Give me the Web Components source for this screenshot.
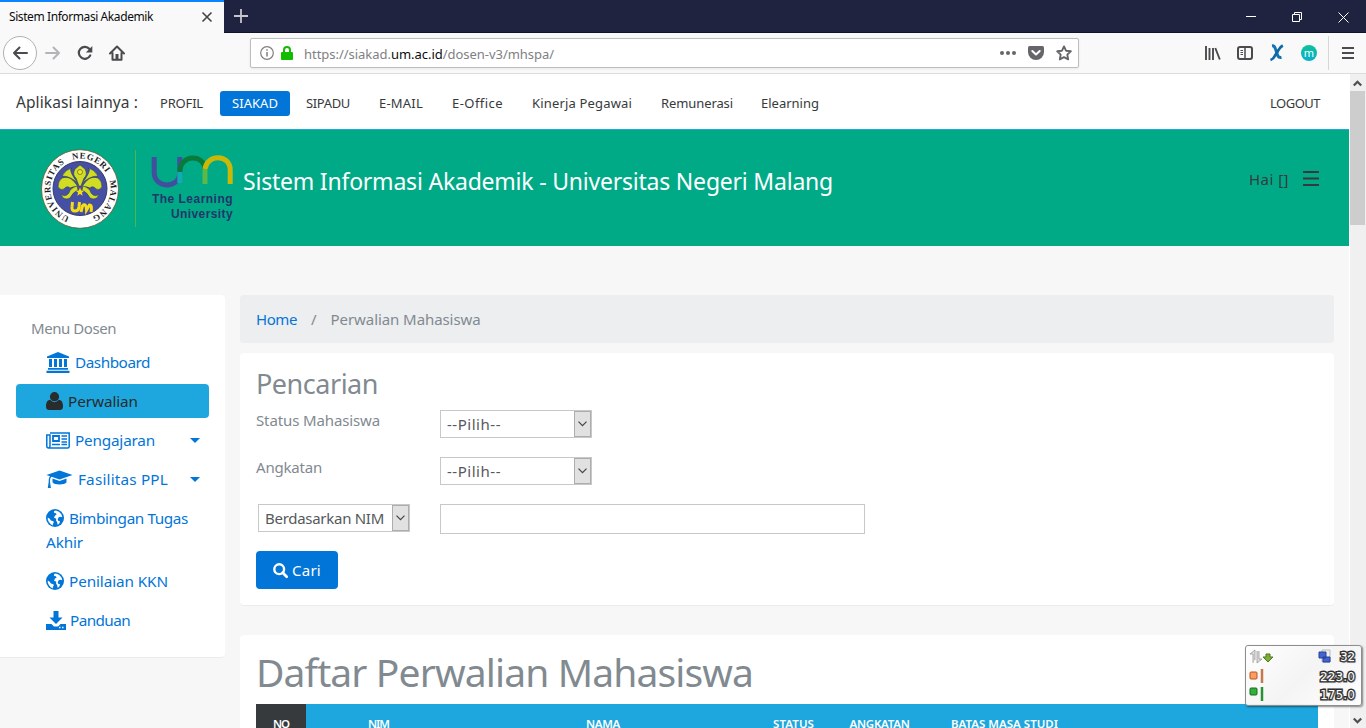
<!DOCTYPE html>
<html lang="id">
<head>
<meta charset="utf-8">
<title>Sistem Informasi Akademik</title>
<style>
html,body{margin:0;height:100%;overflow:hidden;font-family:"Noto Sans","Open Sans",sans-serif;background:#f7f7f7}
</style>
</head>
<body>
<siakad-window></siakad-window>
<script>
const define=(name,html,setup)=>customElements.define(name,class extends HTMLElement{
  connectedCallback(){
    if(this.shadowRoot)return;
    const root=this.attachShadow({mode:'open'});
    root.innerHTML=typeof html==='function'?html(this):html;
    if(setup)setup(this,root);
  }
});

/* A single line of text tracked to a given measure. */
define('ui-text','<style>:host{display:inline-block;white-space:nowrap;flex:none}span{display:inline-block}</style><span><slot></slot></span>',(el,root)=>{
  const w=parseFloat(el.getAttribute('w'));
  if(!w)return;
  const s=root.querySelector('span');
  const n=el.textContent.length;
  el.style.width=w+'px';
  s.style.letterSpacing=((w-s.getBoundingClientRect().width)/n).toFixed(3)+'px';
});

const icons={
 x:[12,12,'<path d="M1.500 1.500l9 9M10.500 1.500l-9 9" fill="none" stroke="currentColor" stroke-width="1.600"/>'],
 plus:[14,14,'<path d="M7 0v14M0 7h14" stroke="currentColor" stroke-width="1.800"/>'],
 back:[16,14,'<path d="M15 7H2M7.500 1.500L2 7l5.500 5.500" fill="none" stroke="currentColor" stroke-width="2" stroke-linecap="round" stroke-linejoin="round"/>'],
 fwd:[16,14,'<path d="M1 7h13M8.500 1.500L14 7l-5.500 5.500" fill="none" stroke="currentColor" stroke-width="2" stroke-linecap="round" stroke-linejoin="round"/>'],
 reload:[16,16,'<path d="M13.200 10.500A6 6 0 1 1 12.500 4" fill="none" stroke="currentColor" stroke-width="2.200" stroke-linecap="round"/><path d="M15.300 1v6.500H8.800z" fill="currentColor"/>'],
 home:[16,16,'<path d="M1 8.500L8 1.500l7 7M3.500 8v6.800h9V8" fill="none" stroke="currentColor" stroke-width="2" stroke-linejoin="round" stroke-linecap="round"/><path d="M6.500 9h3v6h-3z" fill="currentColor"/>'],
 info:[14,14,'<circle cx="7" cy="7" r="6.300" fill="none" stroke="currentColor" stroke-width="1.200"/><path d="M7 6v4.500M7 3.300v1.500" stroke="currentColor" stroke-width="1.500"/>'],
 lock:[12,14,'<path d="M3 7V4a3 3 0 0 1 6 0v3" fill="none" stroke="currentColor" stroke-width="2"/><rect y="6" width="12" height="8" rx="1" fill="currentColor"/>'],
 dots:[16,4,'<g fill="currentColor"><circle cx="2" cy="2" r="2"/><circle cx="8" cy="2" r="2"/><circle cx="14" cy="2" r="2"/></g>'],
 pocket:[16,14,'<path d="M1.500 0h13Q16 0 16 1.500V6a8 8 0 0 1-16 0V1.500Q0 0 1.500 0z" fill="currentColor"/><path d="M4.300 5L8 8.500 11.700 5" fill="none" stroke="#fff" stroke-width="2" stroke-linecap="round" stroke-linejoin="round"/>'],
 star:[16,16,'<path d="M8 1.400l2 4.300 4.800.600-3.500 3.300.900 4.800L8 12.100l-4.200 2.300.900-4.800L1.200 6.300 6 5.700z" fill="none" stroke="currentColor" stroke-width="1.900" stroke-linejoin="round"/>'],
 library:[16,14,'<path d="M1 0v14M4.500 2v12M8 2v12M10.300 2l4.500 11.500" fill="none" stroke="currentColor" stroke-width="1.900"/>'],
 sidebar:[16,14,'<rect x="1" y="1" width="14" height="12" rx="2" fill="none" stroke="currentColor" stroke-width="2"/><path d="M8 1v12" stroke="currentColor" stroke-width="1.500"/><path d="M3.500 4.500h2.500M3.500 6.500h2.500M3.500 8.500h2.500" stroke="currentColor"/>'],
 xbird:[14,16,'<path d="M2 .8Q4.500.500 5.500 4l2 6q1 3 4 2.500" fill="none" stroke="#1172b5" stroke-width="2.900"/><path d="M12.800.500Q10 2 8.500 5L4.800 11Q3.500 14 .5 15" fill="none" stroke="#0d68a8" stroke-width="2.700"/>'],
 menu:[12,14,'<path d="M0 2h12M0 7h12M0 12h12" stroke="currentColor" stroke-width="2"/>'],
 min:[10,10,'<path d="M0 4.500h10" stroke="currentColor"/>'],
 restore:[10,10,'<path d="M.5 2.500h7v7h-7zM2.500 2.500v-2h7v7h-2" fill="none" stroke="currentColor"/>'],
 close:[11,11,'<path d="M.5.500l10 10M10.500.500l-10 10" stroke="currentColor"/>'],
 bank:[24,21,'<path d="M12 0l11 4.500V6H1V4.500zM3 7h3v8H3zM8 7h3v8H8zM13 7h3v8h-3zM18 7h3v8h-3zM2 16h20v1.800H2zM.5 18.800h23V21H.5z" fill="currentColor"/>'],
 user:[17,18,'<circle cx="8.500" cy="4.700" r="4.600" fill="currentColor"/><path d="M4.200 7.800C1 8.200 0 11 0 14.500 0 17 1.300 18 3.300 18h10.400c2 0 3.300-1 3.300-3.500 0-3.500-1-6.300-4.200-6.700Q11 10.200 8.500 10.200T4.200 7.800z" fill="currentColor"/>'],
 news:[24,17,'<path d="M4 1h19.200v13.500q0 1.500-1.500 1.500H2.500Q.8 16 .8 14V3H4v11q0 1.800-1.600 2" fill="none" stroke="currentColor" stroke-width="1.500"/><path d="M7 4h6v5H7z" fill="none" stroke="currentColor" stroke-width="1.800"/><path d="M6 12.500h8M15.500 4h5.500M15.500 7h5.500M15.500 10h5.500M15.500 12.500h5.500" stroke="currentColor" stroke-width="1.600"/>'],
 grad:[27,19,'<path d="M13.500.500L26.500 5 13.500 9.500 5.500 6.800Q4 8 4 10v1.800l.900 6.200H1.800l.900-6.200V10q0-2.300 1.300-3.700L.5 5z" fill="currentColor"/><path d="M6.500 8.500l7 2.500 7-2.500v3.800c-1.500 3-12.500 3-14 0z" fill="currentColor"/>'],
 globe:[18,18,'<circle cx="9" cy="9" r="9" fill="currentColor"/><path d="M8 2l1.800-.4L13 2.800l2.500 2.800.8 2.600-1.800-.5-1.800.6-1 2 .5 1.500 1.800.5-.5 2-1.800 1.700-.5-2.500-1.200-2.300.3-1.500-2.300-1L9 6.500l1.500-.8-.5-1.500L8.200 4zM1.700 8.500l2 1.300 1.200 1.600 2.500.9.400 1.300-1 1.400.2 1.400-2.300-1.200-2-2.500-.9-2.200z" fill="#fff"/>'],
 download:[20,19,'<path d="M7.500 0h5v6.500h4L10 13 3.500 6.500h4zM0 13h5.500L8 15.500h4l2.500-2.500H20v6H0z" fill="currentColor"/><path d="M13 16.500h1.500M16 16.500h1.500" stroke="#fff" stroke-width="1.400"/>'],
 caret:[10,5,'<path d="M0 0h10L5 5z" fill="currentColor"/>'],
 chev:[9,6,'<path d="M.5.700l4 4 4-4" fill="none" stroke="currentColor" stroke-width="1.200"/>'],
 up:[9,7,'<path d="M.8 5.500l3.700-3.700 3.700 3.700" fill="none" stroke="currentColor" stroke-width="2.300"/>'],
 down:[9,7,'<path d="M.8 1.500l3.700 3.700 3.700-3.700" fill="none" stroke="currentColor" stroke-width="2.300"/>'],
 search:[15,15,'<circle cx="6.200" cy="6.200" r="4.900" fill="none" stroke="currentColor" stroke-width="2.400"/><path d="M9.700 9.700l4 4" stroke="currentColor" stroke-width="2.700" stroke-linecap="round"/>'],
 bars:[16,15,'<path d="M0 1h16M0 7.500h16M0 14h16" stroke="currentColor" stroke-width="1.900"/>']
};
define('ui-icon',el=>{const i=icons[el.getAttribute('name')];return `<style>:host{display:inline-block;flex:none;width:${i[0]}px;height:${i[1]}px}svg{display:block;overflow:visible}</style><svg width="${i[0]}" height="${i[1]}" viewBox="0 0 ${i[0]} ${i[1]}">${i[2]}</svg>`});

define('browser-tabs',`<style>
:host{display:flex;height:33px;background:#20233f;box-shadow:inset 0 -1px #11142b;color:#fff;align-items:stretch}
.tab{box-sizing:border-box;width:224px;background:#f9f9fa;border-top:2px solid #0a84ff;display:flex;align-items:center;padding:0 11px 2px 9px;justify-content:space-between;color:#0c0c0d;font:12px "Noto Sans",sans-serif;z-index:1}
.tab ui-icon{color:#444}
.new{margin:9px 0 0 10px;color:#c6c6d0}
.win{margin-left:auto;display:flex;gap:36px;padding:12px 17px 0 0}
</style><div class="tab"><ui-text w="144">Sistem Informasi Akademik</ui-text><ui-icon name="x"></ui-icon></div><ui-icon class="new" name="plus"></ui-icon>
<div class="win"><ui-icon name="min"></ui-icon><ui-icon name="restore"></ui-icon><ui-icon name="close"></ui-icon></div>`);

define('browser-toolbar',`<style>
:host{box-sizing:border-box;display:flex;align-items:center;height:41px;background:#f9f9fa;border-bottom:1px solid #dcdcdd;color:#4a4a4f}
.back{box-sizing:border-box;width:34px;height:34px;margin-left:3px;border:1px solid #b1b1b3;border-radius:50%;background:#fff;display:grid;place-items:center}
.nav{display:flex;align-items:center;gap:16px;margin-left:8px}.f{color:#b5b5b7}
.url{box-sizing:border-box;width:829px;height:30px;margin-left:125px;border:1px solid #bdbdbf;border-radius:2px;box-shadow:0 1px 3px #0001;background:#fff;display:flex;align-items:center;padding:0 6px 0 9px;font:13px "Noto Sans",sans-serif;color:#808084}
.url>ui-text{padding-top:2px}
.lock{color:#12bc00;margin:0 11px 0 7px}b{font-weight:400;color:#0c0c0d}
.acts{margin-left:auto;display:flex;align-items:center;gap:12px;color:#66666a}
.tools{display:flex;align-items:center;gap:16px;margin-left:126px}
.m{width:16px;height:16px;border-radius:50%;background:linear-gradient(#0bc39b,#09aecd);color:#fff;font:11px/15px "Noto Sans";text-align:center}
.sep{width:1px;height:34px;background:#d7d7db;margin:0 13px 0 11px}
</style><div class="back"><ui-icon name="back"></ui-icon></div><div class="nav"><ui-icon class="f" name="fwd"></ui-icon><ui-icon name="reload"></ui-icon><ui-icon name="home"></ui-icon></div>
<div class="url"><ui-icon name="info"></ui-icon><ui-icon class="lock" name="lock"></ui-icon><ui-text w="250">https://siakad.<b>um.ac.id</b>/dosen-v3/mhspa/</ui-text><div class="acts"><ui-icon name="dots"></ui-icon><ui-icon name="pocket"></ui-icon><ui-icon name="star"></ui-icon></div></div>
<div class="tools"><ui-icon name="library"></ui-icon><ui-icon name="sidebar"></ui-icon><ui-icon name="xbird" style="margin:0 1px"></ui-icon><div class="m">m</div></div><div class="sep"></div><ui-icon name="menu"></ui-icon>`);

define('app-links',`<style>
:host{box-sizing:border-box;display:flex;align-items:center;height:56px;padding:3px 29px 0 16px;background:#fff;border-bottom:1px solid #1da7de;color:#373a3c;font-size:13px}
.l{font-size:15.500px;margin-top:-2px}
a{box-sizing:border-box;height:25px;line-height:25px;padding:0 12px;border-radius:3px}
.on{background:#0275d8;color:#fff}.out{margin-left:auto;padding:0}
</style><ui-text class="l" w="122">Aplikasi lainnya :</ui-text><a style="margin-left:10px"><ui-text w="43">PROFIL</ui-text></a><a class="on" style="margin-left:5px"><ui-text w="46">SIAKAD</ui-text></a><a style="margin-left:4px"><ui-text w="44">SIPADU</ui-text></a><a style="margin-left:5px"><ui-text w="44">E-MAIL</ui-text></a><a style="margin-left:5px"><ui-text w="51">E-Office</ui-text></a><a style="margin-left:5px"><ui-text w="100">Kinerja Pegawai</ui-text></a><a style="margin-left:5px"><ui-text w="72">Remunerasi</ui-text></a><a style="margin-left:4px"><ui-text w="58">Elearning</ui-text></a><a class="out"><ui-text w="50">LOGOUT</ui-text></a>`);

define('um-seal',`<style>:host{display:block;width:78px;height:80px}svg{display:block}</style>
<svg width="78" height="80" viewBox="0 0 78 80"><defs><path id="arc" d="M28.500 68A30.200 30.200 0 1 1 50.500 68"/></defs>
<ellipse cx="39" cy="40" rx="38.500" ry="39.300" fill="#fff" stroke="#6b5c28" stroke-width=".8"/><circle cx="39" cy="39.500" r="27" fill="#454fa3" stroke="#363a66"/>
<text font-family="Liberation Serif,serif" font-size="8.800" font-weight="700" fill="#1d1d1d" word-spacing="5"><textPath href="#arc" textLength="166">UNIVERSITAS NEGERI MALANG</textPath></text>
<g fill="#d0dd22" stroke="#29345b" stroke-width=".5"><path d="M37 38C32 30 28 27 21 29q-4 3-4 9 3 4 6 2 3-4 6-1 3-2 8-1z"/><path d="M41 38C46 30 50 27 57 29q4 3 4 9-3 4-6 2-3-4-6-1-3-2-8-1z"/><path d="M38 36Q26 20 31 19q-6 1-10 8 10 0 17 9zM40 36Q52 20 47 19q6 1 10 8-10 0-17 9z"/><path d="M39 16l5 4q3 6-1 9l-3 8h-2l-3-8q-4-3-1-9z"/><path d="M36 37q-7 2-8 7-4 5-8 1 2 7 9 4 3-6 8-8zM42 37q7 2 8 7 4 5 8 1-2 7-9 4-3-6-8-8z"/></g><circle cx="39" cy="23" r="2.500" fill="#f2e41d" stroke="#29345b" stroke-width=".5"/><path d="M39 38.500l1.200 3 3 .2-2.300 2 .8 3-2.700-1.700-2.700 1.700.8-3-2.300-2 3-.2z" fill="#f5dc14"/><path d="M31.500 53l-.5 5q-.5 4 3 4t4-4l.5-5M40 63l1.500-6q3.500-4 4 4l3-5q3 0 1.500 7" fill="none" stroke="#f5dc14" stroke-width="3"/></svg>`);

define('learning-logo',`<style>:host{display:block;width:82px}svg{display:block}p{margin:4px 0 0;text-align:right;color:#23366a;font:700 12px/15px "Liberation Sans",Arial,sans-serif}</style>
<svg width="82" height="33" viewBox="0 0 82 33"><g fill="none" stroke-width="5"><path d="M3.200 2v15.500c0 16.500 25.600 16.500 25.600 0V2" stroke="#414f9e"/><path d="M28.800 28V15" stroke="#12aab3"/><path d="M28.800 17C28.800-1.200 54-1.200 54 15" stroke="#087b3b"/><path d="M54 14v15" stroke="#5cb947"/><path d="M54 14C56-1.200 79.200-1.200 79.200 15v14" stroke="#c9b806"/></g></svg><p><ui-text w="81">The Learning</ui-text><br><ui-text w="62">University</ui-text></p>`);

define('app-banner',`<style>
:host{display:flex;box-sizing:border-box;height:116px;background:#00aa87;padding:19px 30px 0 41px;color:#fff}
.line{width:1px;height:77px;margin:1px 15px 0 16px;background:#4eb54b}learning-logo{margin:6px 0 0}
h1{font-size:23px;line-height:32px;font-weight:400;margin:16px 0 0 10px;height:32px}
.hi{margin:21px 0 0 auto;display:flex;gap:14px;align-items:flex-start;font-size:15px;line-height:20px;color:#373a3c}.hi ui-icon{margin-top:1px}.hi ui-text{margin-top:-1px}
</style><um-seal></um-seal><div class="line"></div><learning-logo></learning-logo><h1><ui-text w="590">Sistem Informasi Akademik - Universitas Negeri Malang</ui-text></h1><div class="hi"><ui-text w="40">Hai []</ui-text><ui-icon name="bars"></ui-icon></div>`);

define('menu-item',el=>`<style>
:host{box-sizing:border-box;display:flex;align-items:center;min-height:34px;padding:5px 9px 5px 30px;margin-bottom:5px;border-radius:4px;color:#0275d8;font-size:15.300px;line-height:24px}
:host([active]){background:#1da7de;color:#292b2c}
.t{margin-left:${el.getAttribute('gap')||5}px}.c{margin-left:auto}
:host([wrap]){display:block}:host([wrap]) .r{display:flex;align-items:center}.r{display:contents}
</style><div class="r"><ui-icon name="${el.getAttribute('icon')}"></ui-icon><ui-text class="t" w="${el.getAttribute('w')}">${el.getAttribute('label')}</ui-text></div>${el.hasAttribute('caret')?'<ui-icon class="c" name="caret"></ui-icon>':''}<slot></slot>`);

define('side-menu',`<style>:host{box-sizing:border-box;display:block;width:225px;height:363px;background:#fff;border-bottom:1px solid #ececec;border-radius:0 4px 4px 0;padding:20px 16px 0 16px;color:#818a91;font-size:15px}
.h{padding-left:15px;line-height:26px;margin-bottom:4px;display:block}</style>
<div class="h"><ui-text w="85">Menu Dosen</ui-text></div>
<menu-item icon="bank" label="Dashboard" w="75"></menu-item><menu-item active icon="user" label="Perwalian" w="70"></menu-item><menu-item caret icon="news" label="Pengajaran" w="80"></menu-item><menu-item caret icon="grad" label="Fasilitas PPL" w="90"></menu-item><menu-item wrap icon="globe" label="Bimbingan Tugas" w="119"><ui-text w="37">Akhir</ui-text></menu-item><menu-item icon="globe" label="Penilaian KKN" w="99"></menu-item><menu-item gap="4" icon="download" label="Panduan" w="60"></menu-item>`);

define('bread-crumb',`<style>:host{display:flex;align-items:center;height:48px;border-radius:4px;background:#eceeef;padding:0 16px;font-size:15px;color:#818a91;gap:14px;margin-bottom:10px}a{color:#0275d8}</style><a><ui-text w="41">Home</ui-text></a><span>/</span><ui-text w="150">Perwalian Mahasiswa</ui-text>`);

define('select-box',el=>`<style>:host{box-sizing:border-box;display:flex;width:152px;height:28px;border:1px solid #c8c8c8;background:#fff;color:#55595c;font-size:15px;line-height:26px;padding-left:6px;justify-content:space-between}
i{box-sizing:border-box;width:17px;background:#e1e1e1;border:1px solid #adadad;display:grid;place-items:center;color:#444}</style><ui-text w="${el.getAttribute('w')}">${el.getAttribute('value')}</ui-text><i><ui-icon name="chev"></ui-icon></i>`);

define('search-card',`<style>
:host{box-sizing:border-box;display:block;height:253px;background:#fff;border-bottom:1px solid #ececec;border-radius:4px;padding:13px 16px 0;color:#818a91;font-size:15px;margin-bottom:29px}
h2{margin:0;font-size:27px;line-height:36px;font-weight:400;height:44px}
.row{display:grid;grid-template-columns:184px 1fr;height:47px}.row>ui-text{line-height:20px}
.inp{box-sizing:border-box;width:425px;height:30px;border:1px solid #c8c8c8;background:#fff}
button{all:unset;box-sizing:border-box;width:82px;height:38px;border-radius:4px;background:#0275d8;color:#fff;display:flex;align-items:center;gap:4px;padding-left:17px;font-size:15px}
</style><h2><ui-text w="122">Pencarian</ui-text></h2>
<div class="row"><ui-text w="124">Status Mahasiswa</ui-text><select-box value="--Pilih--" w="54"></select-box></div>
<div class="row"><ui-text w="66">Angkatan</ui-text><select-box value="--Pilih--" w="54"></select-box></div>
<div class="row"><select-box style="margin-left:2px" value="Berdasarkan NIM" w="119"></select-box><div class="inp"></div></div>
<button><ui-icon name="search"></ui-icon><ui-text w="29">Cari</ui-text></button>`);

define('list-card',`<style>
:host{box-sizing:border-box;display:block;height:140px;background:#fff;border-radius:4px;padding:8px 16px 0;color:#818a91}
h1{margin:0;font-size:39px;line-height:58px;height:61px;font-weight:400}
.th{display:grid;grid-template-columns:50px 145px 304px 77px 95px 155px 1fr;height:50px;background:#1da7de;color:#fff;font-size:11.500px;font-weight:600;text-align:center;line-height:16px}
.th div{padding-top:12px}.th div:first-child{background:#373a3c}
</style><h1><ui-text w="497">Daftar Perwalian Mahasiswa</ui-text></h1><div class="th"><div><ui-text w="16">NO</ui-text></div><div><ui-text w="21">NIM</ui-text></div><div><ui-text w="34">NAMA</ui-text></div><div><ui-text w="41">STATUS</ui-text></div><div><ui-text w="60">ANGKATAN</ui-text></div><div><ui-text w="107">BATAS MASA STUDI</ui-text></div><div></div></div>`);

define('scroll-bar',`<style>:host{box-sizing:border-box;width:17px;background:#f0f0f0;display:flex;flex-direction:column;align-items:center;padding:6px 1px 4px 0;border-left:1px solid #fff;color:#505050}.thumb{width:15px;height:134px;background:#cdcdcd;margin-top:4px}.d{margin-top:auto}</style><ui-icon name="up"></ui-icon><div class="thumb"></div><ui-icon class="d" name="down"></ui-icon>`);

define('net-widget',`<style>
:host{box-sizing:border-box;position:absolute;left:1245px;top:645px;width:117px;height:61px;border:1px solid #8d8d8d;border-radius:3px;background:linear-gradient(135deg,#fffffff2,#f3f3f3e6 50%,#fffffff2);box-shadow:1px 1px 2px #0007;display:grid;grid-template-rows:22px 17px 19px;padding:0 6px 0 3px}
.r{display:flex;align-items:center;justify-content:space-between}svg{display:block}
.n{font:12px/16px "DejaVu Sans",sans-serif;color:#fff;-webkit-text-stroke:2.800px #2c2c2c;paint-order:stroke fill;text-shadow:1px 1px 2px #777}.q{display:flex;gap:8px;align-items:center}
</style><div class="r"><svg width="26" height="16"><path d="M4 14V5H1l5-4v10M8 2v12l5-4h-3V2" fill="#ddd" stroke="#999" stroke-width=".8"/><path d="M17 5h4v3h3l-5 5-5-5h3z" fill="#7cae38" stroke="#4c7b1b"/></svg><div class="q"><svg width="14" height="16"><path d="M4 1h8v12H4z" fill="#eee" stroke="#bbb"/><path d="M1 3h7v6H1zM5 8h7v5H5z" fill="#4765c9" stroke="#2340a0"/></svg><ui-text class="n" w="15">32</ui-text></div></div>
<div class="r"><svg width="17" height="17"><rect x="1" y="4" width="7" height="7" rx="1" fill="#ff9c60" stroke="#b65420"/><path d="M13 1v14" stroke="#c7794c" stroke-width="2.500"/></svg><ui-text class="n" w="35">223.0</ui-text></div>
<div class="r"><svg width="17" height="17"><rect x="1" y="2" width="7" height="7" rx="1" fill="#33af3b" stroke="#176c22"/><path d="M13 1v14" stroke="#289334" stroke-width="2.500"/></svg><ui-text class="n" w="35">175.0</ui-text></div>`);

define('siakad-window',`<style>
:host{display:block;width:1366px;height:728px;overflow:hidden;position:relative}
.view{display:grid;grid-template-columns:1349px 17px;height:654px}.page{height:654px;overflow:hidden;background:#f7f7f7}
.cols{display:grid;grid-template-columns:225px 1094px;gap:15px;margin-top:49px;align-items:start}
</style><browser-tabs></browser-tabs><browser-toolbar></browser-toolbar><div class="view"><div class="page"><app-links></app-links><app-banner></app-banner><div class="cols"><side-menu></side-menu><main><bread-crumb></bread-crumb><search-card></search-card><list-card></list-card></main></div></div><scroll-bar></scroll-bar></div><net-widget></net-widget>`);
</script>
</body>
</html>
